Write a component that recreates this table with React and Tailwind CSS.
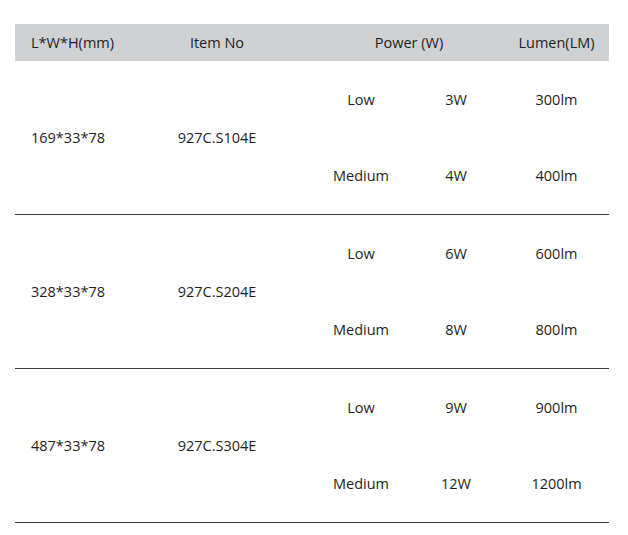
const ROWS=[
  {size:'169*33*78',item:'927C.S104E',modes:[['Low','3W','300lm'],['Medium','4W','400lm']]},
  {size:'328*33*78',item:'927C.S204E',modes:[['Low','6W','600lm'],['Medium','8W','800lm']]},
  {size:'487*33*78',item:'927C.S304E',modes:[['Low','9W','900lm'],['Medium','12W','1200lm']]},
];

export default function App() {
  return (
    <div className="w-[628px] h-[535px] bg-white pt-6 pl-[15px] text-[14.5px] text-[#1e1e1e]" style={{fontFamily:'"Open Sans", "Liberation Sans", sans-serif'}}>
      <div className="w-[594px]">
        <div className="grid grid-cols-[105px_194px_94px_96px_105px] items-center h-[37px] bg-[#d0d1d3]">
          <div className="pl-4">L*W*H(mm)</div>
          <div className="text-center">Item No</div>
          <div className="col-span-2 text-center">Power (W)</div>
          <div className="text-center">Lumen(LM)</div>
        </div>
        {ROWS.map(r=>(
          <div key={r.item} className="grid grid-cols-[105px_194px_94px_96px_105px] grid-rows-[77px_76px] border-b border-[#3a3a3a]">
            <div className="row-span-2 pl-4 flex items-center">{r.size}</div>
            <div className="row-span-2 flex items-center justify-center">{r.item}</div>
            {r.modes.map(m=>m.map((c,i)=>(
              <div key={m[0]+i} className="flex items-center justify-center">{c}</div>
            )))}
          </div>
        ))}
      </div>
    </div>
  );
}
